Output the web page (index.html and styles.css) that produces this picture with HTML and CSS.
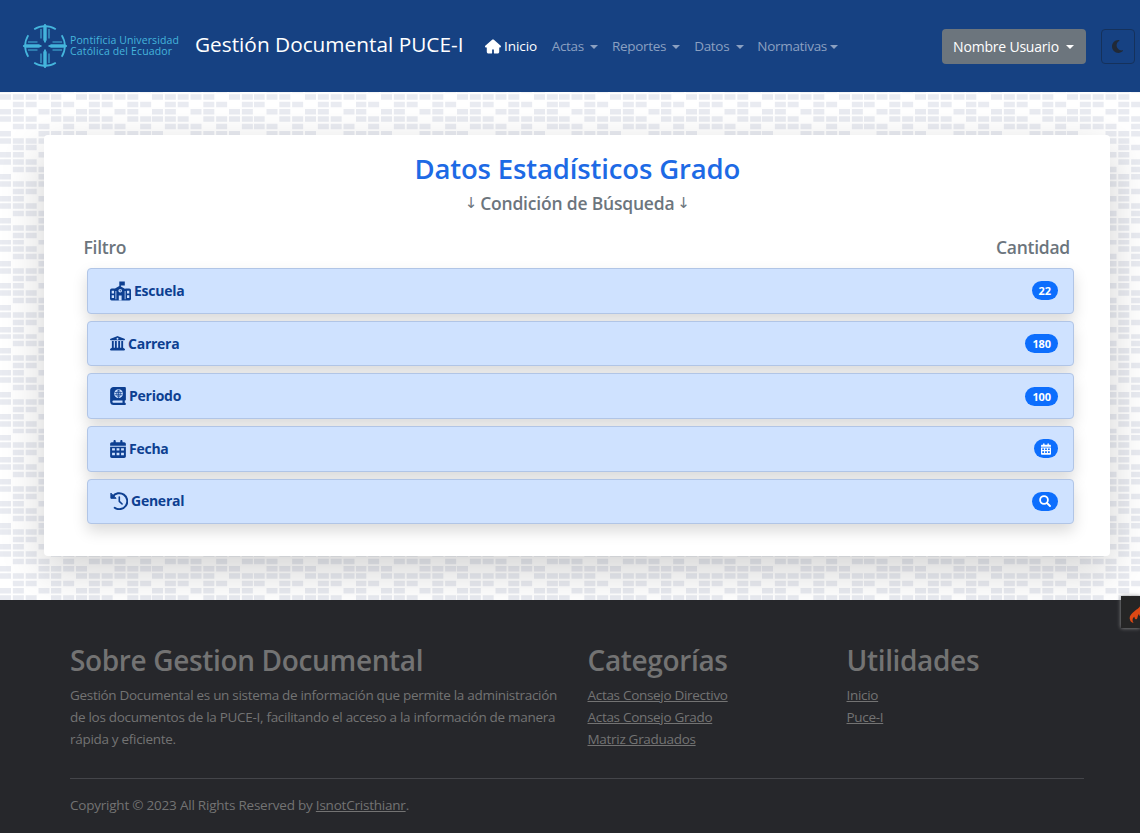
FILE: index.html
```html
<!DOCTYPE html>
<html lang="es">
<head>
<meta charset="utf-8">
<title>Gestión Documental PUCE-I</title>
<link rel="stylesheet" href="styles.css">
</head>
<body>
<header class="navbar">
  <a class="logo">
    <svg class="logo-mark" viewBox="0 0 46 46" fill="none" stroke="#45b5dc">
      <g id="q"><path d="M12.200 6.300A20 20 0 0 1 33.800 6.300" stroke-width="1.700"/>
      <path d="M23 1l1.200 2v14L23 19.500 21.800 17V3z" fill="#45b5dc" stroke-width=".9"/><path d="M19 6v9.500M27 6v9.500" stroke-width="1.100"/></g>
      <use href="#q" transform="rotate(90 23 23)"/><use href="#q" transform="rotate(180 23 23)"/><use href="#q" transform="rotate(270 23 23)"/>
    </svg>
    <span class="logo-text"><span class="logo-l1">Pontificia Universidad</span><span class="logo-l2">Católica del Ecuador</span></span>
  </a>
  <a class="brand">Gestión Documental PUCE-I</a>
  <nav class="links">
    <a class="link active"><svg class="home" viewBox="0 0 576 512" fill="currentColor"><path d="M575.800 255.500c0 18-15 32.100-32 32.100h-32l.7 160.200c0 35-28 64.200-62 64.200H352c-18 0-32-14-32-32v-96c0-18-14-32-32-32s-32 14-32 32v96c0 18-14 32-32 32H128c-36 0-64-28-64-64V287.600H32c-18 0-32-14-32-32.100 0-9 3-17 10-24L266.400 8c7-7 15-8 22-8s15 2 21 7l255.400 224.500c8 7 12 15 11 24z"/></svg><span>Inicio</span></a>
    <a class="link"><span>Actas</span><i class="caret wide"></i></a>
    <a class="link"><span>Reportes</span><i class="caret wide"></i></a>
    <a class="link"><span>Datos</span><i class="caret wide"></i></a>
    <a class="link"><span>Normativas</span><i class="caret"></i></a>
  </nav>
  <div class="actions">
    <button class="user"><span>Nombre Usuario</span><i class="caret"></i></button>
    <button class="theme"><svg viewBox="0 0 384 512" fill="currentColor"><path d="M223.500 32C100 32 0 132.300 0 256s100 224 223.500 224c60.600 0 115.500-24.200 155.800-63.400 5-4.900 6.300-12.500 3.100-18.700s-10.100-9.700-17-8.500c-9.800 1.700-19.800 2.600-30.100 2.600-96.900 0-175.500-78.800-175.500-176 0-65.800 36-123.100 89.300-153.300 6.100-3.500 9.200-10.500 7.700-17.300s-7.300-11.900-14.300-12.500c-6.300-.5-12.600-.8-19-.8z"/></svg></button>
  </div>
</header>

<main class="content">
  <section class="card">
    <h1 class="title">Datos Estadísticos Grado</h1>
    <h2 class="subtitle"><span class="arrow">↓</span><span>Condición de Búsqueda</span><span class="arrow">↓</span></h2>
    <div class="heads"><span>Filtro</span><span>Cantidad</span></div>
    <ul class="list">
      <li class="item">
        <svg class="i-school" viewBox="0 0 21 20"><path fill="currentColor" d="M9.300 .5h5.500v4h-3.900v1l4.400 2.500V7.500h4A1.700 1.700 0 0 1 21 9.200v8.500a1.700 1.700 0 0 1-1.700 1.700H1.700A1.700 1.700 0 0 1 0 17.700V9.200A1.700 1.700 0 0 1 1.700 7.500H5l4.300-2.500z"/><path fill="#cfe2ff" d="M1.700 9.700h2.300v2.800H1.700zm0 4.600h2.300v2.800H1.700zm15.300-4.600h2.300v2.800H17zm0 4.600h2.300v2.800H17zM8.800 14.500h2.800v4.900H8.800zM5.500 10h.8v8.300h-.8zm9.200 0h.8v8.300h-.8z"/><circle cx="10.200" cy="9.800" r="1.800" fill="#cfe2ff"/><path d="M10.200 8.700v1.300h1" stroke="currentColor" stroke-width=".7" fill="none"/></svg>
        <span>Escuela</span><span class="badge">22</span></li>
      <li class="item">
        <svg class="i-landmark" viewBox="0 0 512 512" fill="currentColor"><path fill-rule="evenodd" d="M240 6L20 92c-12 5-20 16-20 28 0 13 11 24 24 24h464c13 0 24-11 24-24 0-12-8-23-20-28L272 6q-16-8-32 0zM256 60a32 32 0 1 0 0 64 32 32 0 1 0 0-64z"/><path d="M128 170H64v234l-50 33c-12 8-17 22-13 35s16 24 31 24h448c14 0 26-9 31-23s-1-28-13-36l-50-33V170h-64v230h-40V170h-64v230h-48V170h-64v230h-40z"/></svg>
        <span>Carrera</span><span class="badge">180</span></li>
      <li class="item">
        <svg class="i-book" viewBox="0 0 448 512"><path fill="currentColor" d="M0 96C0 43 43 0 96 0h320c18 0 32 14 32 32v320c0 18-14 32-32 32v64c18 0 32 14 32 32s-14 32-32 32H96c-53 0-96-43-96-96z"/><path fill="#cfe2ff" d="M96 384h256v64H96a32 32 0 0 1 0-64z"/><circle cx="240" cy="190" r="124" fill="#cfe2ff"/><path d="M130 160h220M130 220h220M240 82v216M240 82c-66 58-66 158 0 216M240 82c66 58 66 158 0 216" fill="none" stroke="currentColor" stroke-width="22"/></svg>
        <span>Periodo</span><span class="badge">100</span></li>
      <li class="item">
        <svg class="i-cal" viewBox="0 0 448 512" fill="currentColor"><path id="cal" fill-rule="evenodd" d="M128 0c18 0 32 14 32 32v32h128V32c0-18 14-32 32-32s32 14 32 32v32h48c27 0 48 21 48 48v48H0v-48c0-27 21-48 48-48h48V32c0-18 14-32 32-32zM0 192h448v272c0 27-21 48-48 48H48c-27 0-48-21-48-48zm56 40v64h80v-64zm128 0v64h80v-64zm128 0v64h80v-64zM56 360v72h80v-72zm128 0v72h80v-72zm128 0v72h80v-72z"/></svg>
        <span>Fecha</span><span class="badge"><svg class="b-cal" viewBox="0 0 448 512" fill="currentColor"><use href="#cal"/></svg></span></li>
      <li class="item">
        <svg class="i-hist" viewBox="0 0 18 18" fill="none" stroke="currentColor" stroke-width="2" stroke-linecap="round" stroke-linejoin="round"><path d="M2.700 4.600A8 8 0 1 1 4.700 15.700"/><path stroke-width="1.600" d="M9.300 5v4.300l2.800 2.700"/><path d="M.9 1.500v4.800h4.800z" fill="currentColor" stroke-width="1"/></svg>
        <span>General</span><span class="badge"><svg class="b-search" viewBox="0 0 12 12" fill="none" stroke="currentColor" stroke-width="1.800" stroke-linecap="round"><circle cx="5" cy="5" r="3.900"/><path d="M8 8l3 3"/></svg></span></li>
    </ul>
  </section>
</main>

<footer class="footer">
  <div class="cols">
    <section>
      <h3>Sobre Gestion Documental</h3>
      <p>Gestión Documental es un sistema de información que permite la administración<br>de los documentos de la PUCE-I, facilitando el acceso a la información de manera<br>rápida y eficiente.</p>
    </section>
    <section>
      <h3>Categorías</h3>
      <a>Actas Consejo Directivo</a><a>Actas Consejo Grado</a><a>Matriz Graduados</a>
    </section>
    <section>
      <h3>Utilidades</h3>
      <a>Inicio</a><a>Puce-I</a>
    </section>
  </div>
  <div class="copy">Copyright © 2023 All Rights Reserved by <u>IsnotCristhianr</u>.</div>
</footer>

<div class="debug"><svg viewBox="0 0 20 22"><path fill="#dd4814" d="M11 0c2 4-2 6-6 9-4 3-6 6-5 9 0 2 2 4 4 4-2-3-1-6 1-7 0 2 1 3 2 3 2-1 1-4 3-6 0 2 2 3 3 5s0 4-2 5c4-1 7-4 7-8 0-3-2-5-3-8-1 1-1 2-2 2 0-3 0-6-2-8z"/></svg></div>
</body>
</html>
```
FILE: styles.css
```css
* { box-sizing: border-box; }
body {
  margin: 0;
  height: 833px;
  overflow: hidden;
  display: flex;
  flex-direction: column;
  font: 14px/21.8px "Open Sans", "Noto Sans", sans-serif;
  background: #fff url("data:image/svg+xml,%3Csvg xmlns='http://www.w3.org/2000/svg' width='76.25' height='43.56' viewBox='0 0 84 48'%3E%3Cpath d='M0 0h12v6H0V0zm28 8h12v6H28V8zm14-8h12v6H42V0zm14 0h12v6H56V0zm0 8h12v6H56V8zM42 8h12v6H42V8zm0 16h12v6H42v-6zm14-8h12v6H56v-6zm14 0h12v6H70v-6zm0-16h12v6H70V0zM28 32h12v6H28v-6zM14 16h12v6H14v-6zM0 24h12v6H0v-6zm0 8h12v6H0v-6zm14 0h12v6H14v-6zm14 8h12v6H28v-6zm-14 0h12v6H14v-6zm28 0h12v6H42v-6zm14-8h12v6H56v-6zm0-8h12v6H56v-6zm14 8h12v6H70v-6zm0 8h12v6H70v-6zM14 24h12v6H14v-6zm14-8h12v6H28v-6zM14 8h12v6H14V8zM0 8h12v6H0V8z' fill='%23e9ebf1'/%3E%3C/svg%3E") 0 0 / 76.25px 43.56px;
}
span { white-space: nowrap; }
.navbar {
  flex: none;
  height: 91.500px;
  display: flex;
  align-items: center;
  padding: 0 5px 0 22px;
  background: #164182;
  color: #fff;
}
.logo { display: flex; align-items: center; width: 173px; gap: 2px; color: #45b5dc; }
.logo-mark { width: 46px; height: 46px; }
.logo-text { display: flex; flex-direction: column; font: 400 10.500px/11px "Open Sans", sans-serif; }
.logo-l1 { letter-spacing: .12px; }
.logo-l2 { letter-spacing: .15px; }
.brand { width: 290px; font-size: 20.800px; line-height: 28px; white-space: nowrap; margin-top: -3px; }
.links { display: flex; color: #8ba0c1; font-size: 13.500px; letter-spacing: -.3px; padding-top: 2px; }
.link { display: flex; align-items: center; margin-right: 13.800px; }
.link.active { color: #fff; letter-spacing: -.05px; margin-right: 14.500px; }
.home { width: 16px; height: 15px; margin-right: 3px; }
.caret { border: 4px solid transparent; border-top-color: currentColor; border-bottom: 0; margin-left: 3px; }
.caret.wide { margin-left: 6.200px; }
.actions { margin-left: auto; display: flex; gap: 15px; }
button { font: inherit; padding: 0; }
.user { width: 144px; height: 35px; margin-top: 1px; padding-top: 1px; border: 0; border-radius: 4px; background: #6c757d; color: #fff; display: flex; align-items: center; justify-content: center; gap: 4px; letter-spacing: -.2px; }
.theme { width: 34.500px; height: 35px; margin-top: 1px; border: 1px solid #15315b; border-radius: 4px; background: none; color: #212936; display: grid; place-items: center; }
.theme svg { width: 11px; height: 15px; }
.content { flex: none; height: 508.500px; padding: 43.500px 30px 0 43.500px; }
.card { height: 421px; padding: 16px 36px 0 43px; background: #fff; border-radius: 4px; box-shadow: 0 14.500px 43.500px rgba(0,0,0,.175); color: #6c757d; }
.title { margin: 0 6px 0 0; text-align: center; color: #1d6ae5; font-size: 27.500px; line-height: 35px; font-weight: 600; letter-spacing: -.15px; }
.subtitle { margin: 6px 6px 0 0; display: flex; justify-content: center; gap: 3px; font-size: 17.500px; line-height: 22px; font-weight: 600; letter-spacing: -.2px; }
.arrow { font-family: "DejaVu Sans", sans-serif; font-size: 15px; font-weight: 400; }
.heads { display: flex; justify-content: space-between; margin: 22px 4px 10px -3px; font-size: 17.500px; line-height: 22px; font-weight: 600; letter-spacing: -.25px; }
.list { list-style: none; margin: 0; padding: 0; display: flex; flex-direction: column; gap: 7px; }
.item { height: 45.650px; padding: 0 15px 0 22px; display: flex; align-items: center; gap: 3.500px; background: #cfe2ff; border: 1px solid #b1c5e6; border-radius: 4px; color: #0d3f91; box-shadow: 0 7px 14.500px rgba(0,0,0,.15); font-weight: 700; letter-spacing: -.25px; }
.badge { margin-left: auto; height: 19px; padding: 0 7px; border-radius: 10px; background: #0d6efd; color: #fff; font-size: 11px; line-height: 19px; display: flex; align-items: center; letter-spacing: -.1px; }
.i-school { width: 21px; height: 20px; }
.i-landmark { width: 15px; height: 15px; }
.i-book, .i-cal { width: 16px; height: 18px; }
.i-hist { width: 18px; height: 18px; }
.b-cal { width: 10px; height: 12px; }
.b-search { width: 12px; height: 12px; }
.footer { flex: 1; padding: 43px 56px 0 70px; background: #26272b; color: #737373; font-size: 13.500px; letter-spacing: -.3px; }
.cols { display: grid; grid-template-columns: 517.500px 259px 1fr; height: 135px; }
.cols section { display: flex; flex-direction: column; align-items: flex-start; }
h3 { margin: 0 0 8px; padding-top: 1px; font-size: 28px; line-height: 33px; font-weight: 600; white-space: nowrap; letter-spacing: -.35px; }
p { margin: 0; white-space: nowrap; }
.cols a, u { text-decoration: underline; }
.copy { border-top: 1px solid #44454a; padding-top: 16px; letter-spacing: -.22px; }
.debug { position: absolute; right: 0; top: 596px; width: 19px; height: 32px; background: #252525; box-shadow: 0 0 4px #999; overflow: hidden; padding: 7px 0 0 8px; }
.debug svg { width: 20px; height: 20px; display: block; }
```
